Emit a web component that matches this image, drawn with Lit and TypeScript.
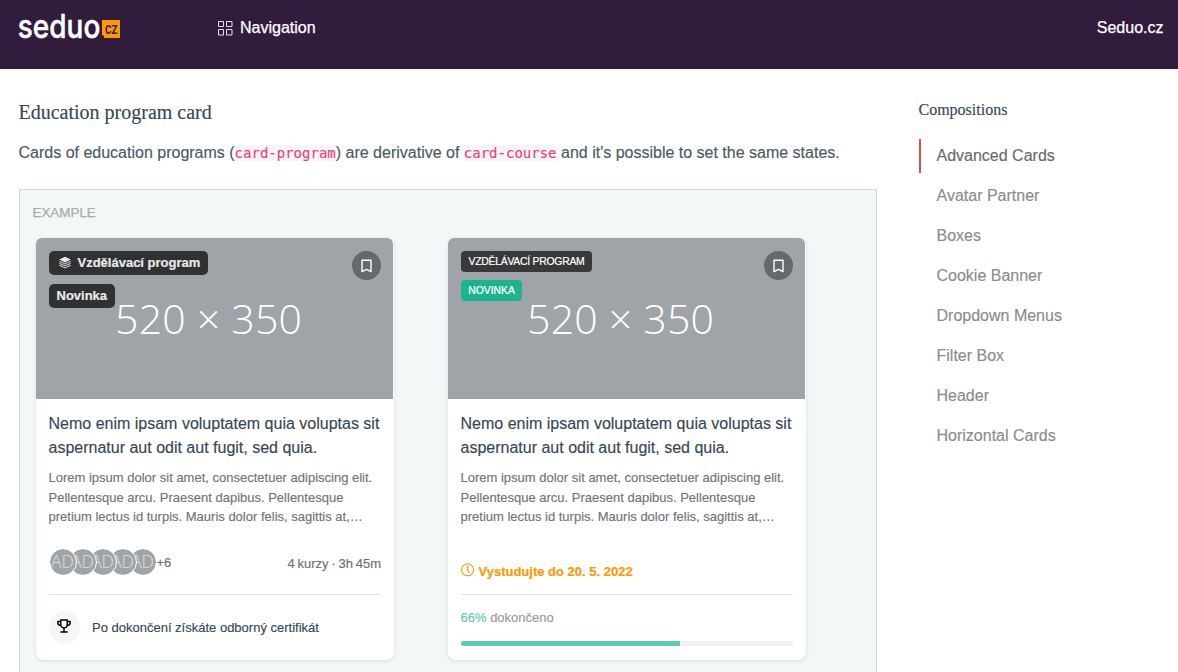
import { LitElement, html, css, svg } from "lit";
import { customElement, property } from "lit/decorators.js";

const layersIcon = svg`<svg width="14" height="14" viewBox="0 0 14 14" fill="currentColor">
  <path d="M7 .8 12.800 3.500 7 6.500 1.200 3.500z"/>
  <path fill="none" stroke="currentColor" stroke-width="1.100" stroke-opacity=".8" d="M1.300 5.200 7 8l5.700-2.800M1.300 7.200 7 10l5.700-2.800M1.300 9.200 7 12l5.700-2.800"/>
</svg>`;
const bookmarkIcon = svg`<svg width="11" height="14" viewBox="0 0 11 14" fill="none" stroke="#fff" stroke-width="1.4" stroke-linejoin="round">
  <path d="M1 1.2h9v11.4L5.5 10.300 1 12.6z"/>
</svg>`;
const gridIcon = svg`<svg width="15" height="15" viewBox="0 0 15 15" fill="none" stroke="#fff" stroke-opacity=".85">
  <path d="M.5.5h5v5h-5zM8.500.5h5.500v5h-5.500zM.5 8.500h5v5.500h-5zM8.500 8.500h5.500v5.500h-5.500z"/>
</svg>`;
const clockIcon = svg`<svg width="14" height="14" viewBox="0 0 14 14" fill="none" stroke="#f90" stroke-width="1.100">
  <circle cx="6.600" cy="6.800" r="6"/><path d="M6.600 2.800v4.600l2.200 2.200"/>
</svg>`;
const trophyIcon = svg`<svg width="14" height="14" viewBox="0 0 14 14" fill="none" stroke="#000" stroke-width="1.400">
  <path d="M3.800 1h6.400v4.200c0 2.200-1.300 3.700-3.200 3.700S3.800 7.400 3.800 5.200zM3.800 2.500H.8v1.300c0 1.500 1.300 2.700 3.400 2.900M10.200 2.500h3v1.300c0 1.500-1.300 2.700-3.400 2.900M7 8.800v4M3.400 13h7.200"/>
</svg>`;

@customElement("program-card")
export class ProgramCard extends LitElement {
  @property({ type: Boolean }) enrolled = false;
  @property({ type: Number }) progress = 0;

  static styles = css`
    :host { display: block; width: 358px; height: 422px; }
    * { box-sizing: border-box; }
    svg { display: block; flex: none; }
    .card { height: 100%; display: flex; flex-direction: column; background: #fff; border-radius: 8px; box-shadow: 0 1px 4px rgba(40, 60, 80, .13); }
    .cover { position: relative; width: 357px; height: 161px; flex: none; background: #9fa4a8; border-radius: 6px 6px 0 0; overflow: hidden; }
    .size { width: 357px; height: 161px; font: 300 41px "Open Sans", sans-serif; }
    .badges { position: absolute; left: 13px; top: 13px; display: flex; flex-direction: column; align-items: flex-start; gap: 9px; }
    .badge { display: flex; align-items: center; height: 24px; padding: 0 7.500px 2px; border-radius: 5px; background: #303133; color: #e9eaeb; font-size: 13px; font-weight: 700; white-space: nowrap; -webkit-text-stroke: .2px; }
    .badge svg { margin: 2px 5.500px 0 1.500px; }
    .small { gap: 8px; }
    .small .badge { height: 21px; padding: 0 7.500px; border-radius: 4px; color: #fff; background: #38393b; font-size: 10.400px; letter-spacing: -.25px; font-weight: 400; text-transform: uppercase; }
    .small .new { background: #1ab58f; letter-spacing: 0; padding: 0 7.200px; }
    .save { position: absolute; right: 12px; top: 13px; width: 29px; height: 29px; border-radius: 50%; background: #66696b; display: grid; place-items: center; }
    .body { flex: 1; padding: 12.500px 12.500px 0; display: flex; flex-direction: column; }
    h3 { margin: 0; font-size: 16px; line-height: 24px; font-weight: 400; color: #364855; white-space: nowrap; -webkit-text-stroke: .15px; }
    .text { margin: 8.500px 0 0; font-size: 13px; line-height: 19.500px; color: #707477; white-space: nowrap; -webkit-text-stroke: .15px; }
    .meta { display: flex; align-items: center; height: 27px; margin-top: 22px; font-size: 13px; color: #6c7073; -webkit-text-stroke: .15px; }
    .faces { display: flex; }
    .face { position: relative; width: 28px; height: 28px; margin-right: -8px; border: 1px solid #fff; border-radius: 50%; background: #9fa4a8; background-clip: padding-box; color: #d9dbdd; font: 300 17.500px/25px "Open Sans", sans-serif; overflow: hidden; display: flex; justify-content: center; }
    .more { margin-left: 8px; padding-top: 1px; }
    .length { margin-left: auto; padding-top: 2px; word-spacing: -.8px; position: relative; left: -.5px; }
    .deadline { display: flex; height: 27px; margin-top: 31.500px; gap: 4px; align-items: flex-start; padding-top: 5.500px; font-size: 13px; line-height: 15px; font-weight: 700; color: #f90; -webkit-text-stroke: .2px; }
    .deadline svg { margin-top: -.5px; }
    hr { width: 332px; margin: 0; border: 0; border-top: 1px solid #dfe1e3; }
    .gap { flex: none; height: 18.500px; }
    .gap.tight { height: 9px; }
    .award { display: flex; align-items: center; margin-top: 16px; gap: 12.500px; height: 33px; font-size: 13px; color: #364855; -webkit-text-stroke: .15px; }
    .cup { width: 31px; height: 33px; border-radius: 50%; background: #f5f6f8; display: grid; place-items: center; padding-bottom: 3px; }
    .state { margin-top: 15px; font-size: 13px; line-height: 16px; color: #96999c; -webkit-text-stroke: .15px; }
    .state b { font-weight: 400; color: #5ccbb0; }
    .bar { width: 332px; height: 5px; margin-top: 15px; border-radius: 3px; background: #f0f1f3; overflow: hidden; }
    .fill { height: 100%; background: #5ccbb0; }
  `;

  render() {
    return html`<div class="card">
      <div class="cover">
        <svg class="size" fill="#fff"><text x="79" y="95.500" textLength="187">520 × 350</text></svg>
        <div class="badges ${this.enrolled ? "small" : ""}">
          <span class="badge">${this.enrolled ? "" : layersIcon}Vzdělávací program</span>
          <span class="badge new">Novinka</span>
        </div>
        <span class="save">${bookmarkIcon}</span>
      </div>
      <div class="body">
        <h3>Nemo enim ipsam voluptatem quia voluptas sit<br />aspernatur aut odit aut fugit, sed quia.</h3>
        <p class="text">Lorem ipsum dolor sit amet, consectetuer adipiscing elit.<br />Pellentesque arcu. Praesent dapibus. Pellentesque<br />pretium lectus id turpis. Mauris dolor felis, sagittis at,…</p>
        ${this.enrolled
          ? html`<div class="deadline">${clockIcon}<span>Vystudujte do 20. 5. 2022</span></div>
              <div class="gap tight"></div><hr />
              <div class="state"><b>${this.progress}%</b> dokončeno</div>
              <div class="bar"><div class="fill" style="width:${this.progress}%"></div></div>`
          : html`<div class="meta">
                <div class="faces">${[5, 4, 3, 2, 1].map((z) => html`<span class="face" style="z-index:${z}">AD</span>`)}</div>
                <span class="more">+6</span><span class="length">4 kurzy · 3h 45m</span>
              </div>
              <div class="gap"></div><hr />
              <div class="award"><span class="cup">${trophyIcon}</span>Po dokončení získáte odborný certifikát</div>`}
      </div>
    </div>`;
  }
}

@customElement("app-root")
export class AppRoot extends LitElement {
  static styles = css`
    :host { display: block; height: 672px; overflow: hidden; background: #fff; font: 16px "Liberation Sans", Arial, sans-serif; color: #4a5a65; }
    * { box-sizing: border-box; }
    svg { display: block; }
    header { height: 69px; padding: 0 14.500px 0 18px; display: flex; align-items: flex-start; background: #321c3e; color: #fff; -webkit-text-stroke: .25px; }
    .logo { width: 199.500px; height: 50px; flex: none; -webkit-text-stroke: 0; }
    .word { font: 500 33px Inter, sans-serif; stroke: #fff; stroke-width: .5px; }
    .cz { font: 700 13.500px Roboto, sans-serif; }
    .nav { display: flex; align-items: center; gap: 7.500px; height: 56px; }
    .site { margin-left: auto; line-height: 55px; }
    .page { display: flex; }
    main { width: 859px; margin-left: 18px; padding-top: 31px; flex: none; }
    h2 { margin: 0 0 0 .5px; font: 20px/24px "Liberation Serif", "Times New Roman", serif; color: #364855; -webkit-text-stroke: .15px; }
    .lead { margin: 17px 0 0 .5px; line-height: 24px; white-space: nowrap; -webkit-text-stroke: .15px; }
    code { font: 14px "DejaVu Sans Mono", monospace; color: #e83e8c; background: #f5f5f5; }
    .example { margin: 24px 0 0 1px; height: 520px; border: 1px solid #d4d8da; background: #f3f7f8; padding: 15px 0 0 12.500px; }
    .label { font-size: 13.400px; line-height: 16px; color: #aaacad; -webkit-text-stroke: .25px; }
    .cards { display: flex; gap: 54px; padding: 17px 0 0 3.500px; }
    aside { margin-left: 41.500px; padding-top: 30px; -webkit-text-stroke: .15px; }
    h4 { margin: 0 0 19px; font: 16px/21px "Liberation Serif", "Times New Roman", serif; color: #364855; }
    .link { height: 34px; margin-bottom: 6px; padding-left: 16px; border-left: 2px solid transparent; line-height: 33px; color: #8b8b8b; }
    .on { border-color: #d9534f; color: #6a6a6a; }
  `;

  private links = ["Advanced Cards", "Avatar Partner", "Boxes", "Cookie Banner", "Dropdown Menus", "Filter Box", "Header", "Horizontal Cards"];

  render() {
    return html`
      <header>
        <svg class="logo" fill="#fff">
          <text class="word" x="-.2" y="37.500" textLength="82.500" lengthAdjust="spacingAndGlyphs">seduo</text>
          <path d="M84 20h18v18H86v-2.500h-2z" fill="#f90"/>
          <text class="cz" x="87" y="34" fill="#321c3e" textLength="12.500" lengthAdjust="spacingAndGlyphs">CZ</text>
        </svg>
        <div class="nav">${gridIcon}<span>Navigation</span></div>
        <span class="site">Seduo.cz</span>
      </header>
      <div class="page">
        <main>
          <h2>Education program card</h2>
          <p class="lead">Cards of education programs (<code>card-program</code>) are derivative of <code>card-course</code> and it's possible to set the same states.</p>
          <section class="example">
            <div class="label">EXAMPLE</div>
            <div class="cards">
              <program-card></program-card>
              <program-card enrolled progress="66"></program-card>
            </div>
          </section>
        </main>
        <aside>
          <h4>Compositions</h4>
          ${this.links.map((name, i) => html`<div class="link ${i === 0 ? "on" : ""}">${name}</div>`)}
        </aside>
      </div>`;
  }
}
